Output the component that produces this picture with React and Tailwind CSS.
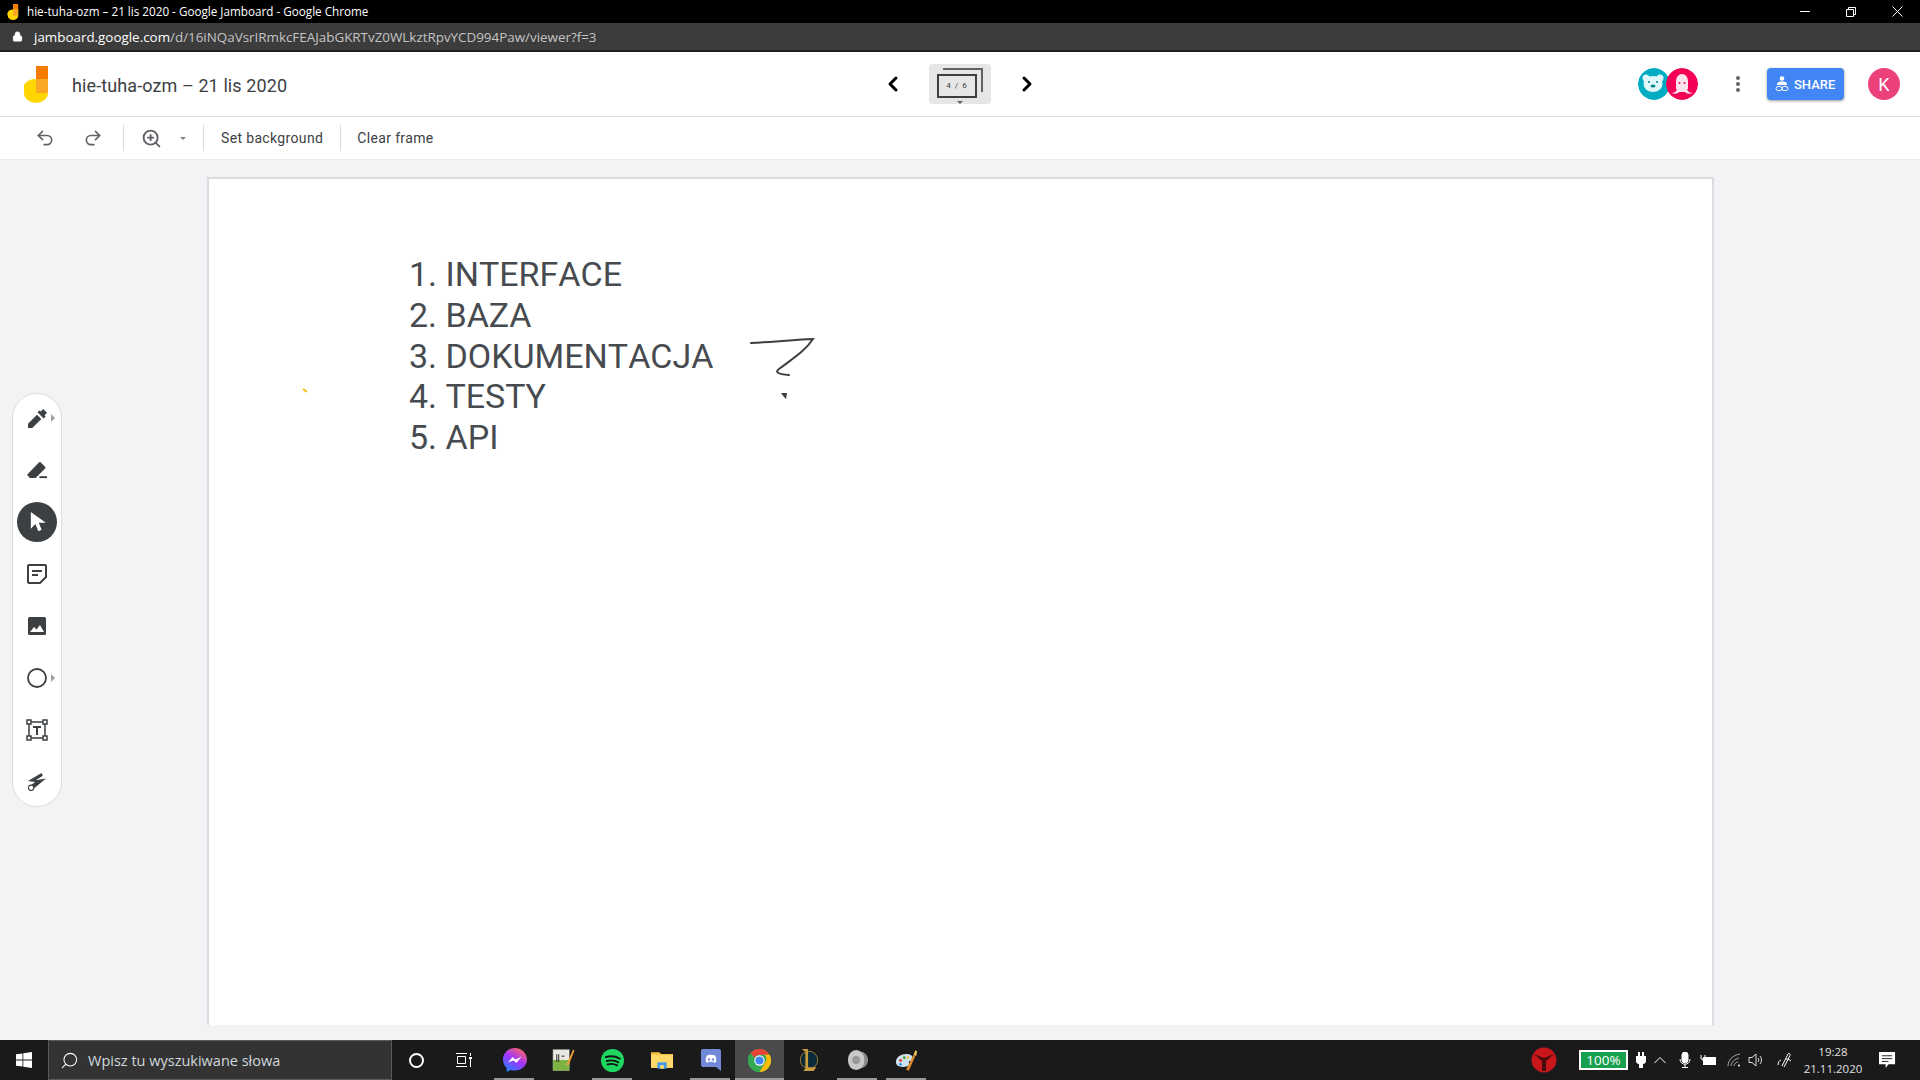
import React from "react";
import { Undo2, Redo2, ZoomIn, ChevronLeft, ChevronRight, Lock, Search } from "lucide-react";

const roboto = { fontFamily: "Roboto, sans-serif" };

function JamLogo({ className }) {
  return (
    <svg viewBox="0 0 24 37" className={className}>
      <rect x="12" y="0" width="12" height="14" fill="#f57c00" />
      <path d="M24 14v13a12 10 0 0 1-24 0 12 10 0 0 1 12-14h12z" fill="#ffd600" />
      <rect x="12" y="13" width="12" height="14" fill="#f9a825" />
    </svg>
  );
}

function Bear() {
  return (
    <svg viewBox="0 0 32 32" className="w-8 h-8 rounded-full">
      <circle cx="16" cy="16" r="16" fill="#00acc1" />
      <circle cx="8" cy="10" r="3.5" fill="#e0f7fa" />
      <circle cx="22" cy="10" r="3.5" fill="#e0f7fa" />
      <ellipse cx="15" cy="16" rx="9.5" ry="8" fill="#e0f7fa" />
      <circle cx="11" cy="14" r="1" fill="#00838f" />
      <circle cx="19" cy="14" r="1" fill="#00838f" />
      <ellipse cx="15" cy="18" rx="2.5" ry="1.5" fill="#00838f" />
    </svg>
  );
}

function Squid() {
  return (
    <svg viewBox="0 0 32 32" className="w-8 h-8 rounded-full">
      <circle cx="16" cy="16" r="16" fill="#f50057" />
      <path d="M10 21V13a6 7 0 0 1 12 0v8z" fill="#fce4ec" />
      <path d="M5 25c3 0 5-1 6-4h10c1 3 3 4 6 4-4 1.5-7 .5-8-1h-6c-1 1.500-4 2.500-8 1z" fill="#fce4ec" />
      <circle cx="13.500" cy="15" r="1" fill="#f50057" />
      <circle cx="18.500" cy="15" r="1" fill="#f50057" />
    </svg>
  );
}

const D = "#3c4043";

const PenI = () => (
  <svg viewBox="0 0 20 20" className="w-[19px] h-[19px]" fill={D}>
    <path d="M0 20v-4.500L9.500 6l4.500 4.500L4.500 20z" />
    <path d="M10 3.500 12 1.500l1.500 1L16 0l4 4-2.500 2.500 1 1.500-2 2z" />
  </svg>
);
const EraserI = () => (
  <svg viewBox="0 0 22 20" className="w-[21px] h-[19px]" fill={D}>
    <path d="M0 14.500 12.500 1.500a1.500 1.500 0 0 1 2 0l4.500 4.500a1.500 1.500 0 0 1 0 2L9 18H3z" />
    <rect x="13" y="16" width="8" height="2" />
  </svg>
);
const CursorI = () => (
  <svg viewBox="0 0 20 24" className="w-[17px] h-[20px]" fill="#fff">
    <path d="M2 0v20l5.500-5.500 3.500 8.500 4-1.700-3.500-8.300H20z" />
  </svg>
);
const NoteI = () => (
  <svg viewBox="0 0 20 20" className="w-5 h-5" fill="none" stroke={D} strokeWidth="2">
    <path d="M2 1h16a1 1 0 0 1 1 1v11l-6 6H2a1 1 0 0 1-1-1V2a1 1 0 0 1 1-1z" />
    <path d="M5 7h10M5 11h6" />
  </svg>
);
const ImageI = () => (
  <svg viewBox="0 0 18 18" className="w-[18px] h-[18px]">
    <rect width="18" height="18" rx="1.500" fill={D} />
    <path d="M2 15l4-5 2.500 2.500L12 8l4 7z" fill="#fff" />
  </svg>
);
const CircleI = () => (
  <svg viewBox="0 0 20 20" className="w-5 h-5" fill="none" stroke={D} strokeWidth="1.800">
    <circle cx="10" cy="10" r="9" />
  </svg>
);
const TextI = () => (
  <svg viewBox="0 0 22 22" className="w-[22px] h-[22px]">
    <path d="M3 3h16v16H3z" fill="none" stroke={D} strokeWidth="1.500" />
    <g fill="#fff" stroke={D} strokeWidth="1.500">
      <rect x="1" y="1" width="4" height="4" />
      <rect x="17" y="1" width="4" height="4" />
      <rect x="1" y="17" width="4" height="4" />
      <rect x="17" y="17" width="4" height="4" />
    </g>
    <path d="M7 7h8v2h-3v7h-2V9H7z" fill={D} />
  </svg>
);
const LaserI = () => (
  <svg viewBox="0 0 20 20" className="w-[18px] h-[18px]">
    <path d="M0 9 15 0l1.500 3-8 5L20 6 5.500 18 3 13.500l5-3.500z" fill={D} />
    <circle cx="3.500" cy="16.500" r="3" fill="#fff" stroke={D} strokeWidth="1.200" />
  </svg>
);
const Tri = () => <span className="absolute right-[6px] top-1/2 -mt-[4px] w-0 h-0 border-y-[4px] border-y-transparent border-l-[4px] border-l-[#9aa0a6]" />;

const tools = [
  { i: <PenI />, t: true },
  { i: <EraserI /> },
  { i: <CursorI />, a: true },
  { i: <NoteI /> },
  { i: <ImageI /> },
  { i: <CircleI />, t: true },
  { i: <TextI /> },
  { i: <LaserI /> },
];

const Messenger = () => (
  <svg viewBox="0 0 24 24" className="w-6 h-6">
    <defs>
      <linearGradient id="msg" x1="0.200" y1="1" x2="0.800" y2="0">
        <stop offset="0" stopColor="#1e88ff" />
        <stop offset="0.500" stopColor="#a033ff" />
        <stop offset="1" stopColor="#ff6968" />
      </linearGradient>
    </defs>
    <path d="M12 0C5.300 0 0 5 0 11.500c0 3.400 1.400 6.300 3.700 8.400V24l3.800-2.100c1.400.4 2.900.6 4.500.6 6.700 0 12-5 12-11S18.700 0 12 0z" fill="url(#msg)" />
    <path d="M5 14.500 9.500 9l3 2.500L18.500 8.500 13.500 15l-3-2.500z" fill="#fff" />
  </svg>
);
const Notepad = () => (
  <svg viewBox="0 0 24 26" className="w-[23px] h-[26px]">
    <rect x="1" y="2" width="17" height="22" fill="#e8e8e0" stroke="#888" strokeWidth="0.500" />
    <rect x="1" y="13" width="17" height="11" fill="#7cb342" />
    <path d="M5 7v8M7 7v8M10 9h3" stroke="#222" strokeWidth="1" />
    <path d="M15 18 22 2l1.500 1L17 19z" fill="#f0a030" />
  </svg>
);
const Spotify = () => (
  <svg viewBox="0 0 24 24" className="w-[23px] h-[23px]">
    <circle cx="12" cy="12" r="12" fill="#1ed760" />
    <path d="M5 8.500c5-1.500 10-1 14.500 1.500M6 12.500c4-1 8.500-.8 12 1.300M6.800 16c3.500-.8 7-.6 10 1" fill="none" stroke="#111" strokeWidth="2" strokeLinecap="round" />
  </svg>
);
const Folder = () => (
  <svg viewBox="0 0 24 20" className="w-[22px] h-[19px]">
    <path d="M0 1h9l2 2h13v15H0z" fill="#f6c243" />
    <rect x="0" y="4" width="24" height="14" fill="#ffd969" />
    <rect x="7" y="12" width="10" height="7" fill="#3d9be9" />
    <rect x="10" y="15" width="4" height="4" fill="#ffd969" />
  </svg>
);
const Discord = () => (
  <svg viewBox="0 0 20 22" className="w-[20px] h-[22px]">
    <path d="M2 0h16a2 2 0 0 1 2 2v20l-5-4H2a2 2 0 0 1-2-2V2a2 2 0 0 1 2-2z" fill="#7289da" />
    <path d="M5 13c-.6-2.500 0-5 1-6.500 2-1 6-1 8 0 1 1.500 1.600 4 1 6.500-1 .6-1.500.8-2 .8l-.7-1h-4.600l-.7 1c-.5 0-1-.2-2-.8z" fill="#fff" />
    <circle cx="8" cy="10.500" r="1.200" fill="#7289da" />
    <circle cx="12" cy="10.500" r="1.200" fill="#7289da" />
  </svg>
);
const Chrome = () => (
  <svg viewBox="0 0 24 24" className="w-[23px] h-[23px]">
    <circle cx="12" cy="12" r="12" fill="#34a853" />
    <path d="M12 0a12 12 0 0 1 10.400 6H12a6 6 0 0 0-5.200 3L2.600 4.500A12 12 0 0 1 12 0z" fill="#ea4335" />
    <path d="M22.400 6A12 12 0 0 1 12 24l5.200-9a6 6 0 0 0 0-9z" fill="#fbbc05" />
    <path d="M2.600 4.500 6.800 9v6l5.200 9A12 12 0 0 1 2.600 4.500z" fill="#34a853" />
    <circle cx="12" cy="12" r="5.400" fill="#fff" />
    <circle cx="12" cy="12" r="4.300" fill="#4285f4" />
  </svg>
);
const Lol = () => (
  <svg viewBox="0 0 24 26" className="w-[22px] h-[24px]">
    <circle cx="12" cy="13" r="9.500" fill="#0a2a3a" stroke="#c89b3c" strokeWidth="0.800" />
    <path d="M4 1h7v20h9l-3 4H6l2-3V4z" fill="#c89b3c" />
  </svg>
);
const Speaker = () => (
  <svg viewBox="0 0 24 24" className="w-[22px] h-[22px]">
    <ellipse cx="15" cy="12" rx="8" ry="9" fill="#8a8a8a" />
    <ellipse cx="10" cy="12" rx="9" ry="11" fill="#c8c8c8" />
    <circle cx="10" cy="12" r="4.500" fill="#999" />
  </svg>
);
const Paint = () => (
  <svg viewBox="0 0 26 24" className="w-6 h-[23px]">
    <path d="M1 14C1 8 7 5 12 5c6 0 8 3 7 6-1 2-4 1-4 3s1 3-1 4c-6 2-13 1-13-4z" fill="#cfe2f0" />
    <circle cx="6" cy="12" r="1.600" fill="#e53935" />
    <circle cx="10" cy="9" r="1.600" fill="#43a047" />
    <circle cx="14" cy="9" r="1.400" fill="#fbc02d" />
    <circle cx="6" cy="16" r="1.400" fill="#1e88e5" />
    <path d="M12 22 20 6l2 1-7 16z" fill="#e08a2c" />
    <path d="M20 6l2-5 2 1-1 5z" fill="#f5c060" />
  </svg>
);

const taskIcons = [
  { i: <Messenger />, u: true, w: "w-[49px]" },
  { i: <Notepad />, w: "w-[49px]" },
  { i: <Spotify />, u: true, w: "w-[49px]" },
  { i: <Folder />, w: "w-[49px]" },
  { i: <Discord />, u: true, w: "w-[49px]" },
  { i: <Chrome />, u: true, a: true, w: "w-[49px]" },
  { i: <Lol />, w: "w-[49px]" },
  { i: <Speaker />, u: true, w: "w-[49px]" },
  { i: <Paint />, u: true, w: "w-[49px]" },
];

function TrayIcons() {
  return (
    <>
      <svg viewBox="0 0 10 16" className="w-[10px] h-4 ml-[8px]" fill="#fff">
        <path d="M2 0h2v4h2V0h2v4h2v5c0 2-1.500 3-3 3v4H3v-4c-1.500 0-3-1-3-3V4h2z" />
      </svg>
      <svg viewBox="0 0 12 8" className="w-3 h-2 ml-[8px]" fill="none" stroke="#fff" strokeWidth="1">
        <path d="M.5 7 6 1.500 11.500 7" />
      </svg>
      <svg viewBox="0 0 12 16" className="w-3 h-4 ml-[13px]" fill="none" stroke="#fff">
        <rect x="3" y="0" width="6" height="11" rx="3" fill="#fff" />
        <path d="M1 7c0 7 10 7 10 0M6 12.500V16M3 15.500h6" />
      </svg>
      <svg viewBox="0 0 17 12" className="w-[17px] h-3 ml-[9px]" fill="none" stroke="#fff">
        <rect x="3.500" y="3.500" width="12" height="7" fill="#fff" />
        <path d="M1 1v4h4V1M3 5v2" />
      </svg>
      <svg viewBox="0 0 14 14" className="w-[14px] h-[14px] ml-[10px]" fill="none" stroke="#aaa">
        <path d="M1 13C1 7 6 2 13 1M4 13c0-4 4-7 8-8M7 13c0-2 2-4 4-4" />
        <circle cx="12" cy="12.500" r="1" fill="#fff" stroke="none" />
      </svg>
      <svg viewBox="0 0 16 14" className="w-4 h-[14px] ml-[7px]" fill="none" stroke="#ddd">
        <path d="M1 4.500h3L8 1v12L4 9.500H1zM10 5c1 1 1 3 0 4M12 3c2 2 2 6 0 8" />
      </svg>
      <svg viewBox="0 0 16 16" className="w-4 h-4 ml-[13px]" fill="none" stroke="#fff">
        <path d="M1 13c0-3 2-5 3-5M5 14 11 2c1-1.500 3 0 2 1.500L7 15M9 7c2 0 4 1 5 2" />
      </svg>
    </>
  );
}

export default function App() {
  return (
    <div className="w-[1920px] h-[1080px] flex flex-col overflow-hidden bg-[#f1f3f4]" style={roboto}>
      {/* window title */}
      <div className="h-[23px] bg-black flex items-center shrink-0 pl-[7px] relative">
        <JamLogo className="w-[12px] h-[16px]" />
        <span className="ml-[8px] text-white text-[11.700px]" style={{ fontFamily: '"Open Sans", sans-serif' }}>
          hie-tuha-ozm – 21 lis 2020 - Google Jamboard - Google Chrome
        </span>
        <div className="ml-auto flex items-center h-full text-white">
          <span className="w-[46px] flex justify-center"><span className="block w-[10px] h-px bg-white" /></span>
          <span className="w-[46px] flex justify-center">
            <svg viewBox="0 0 10 10" className="w-[10px] h-[10px]" fill="none" stroke="#fff"><path d="M.5 2.500h7v7h-7zM2.500 2.500v-2h7v7h-2" /></svg>
          </span>
          <span className="w-[46px] flex justify-center">
            <svg viewBox="0 0 11 11" className="w-[11px] h-[11px]" fill="none" stroke="#fff"><path d="M.5.500l10 10M10.500.500l-10 10" /></svg>
          </span>
        </div>
      </div>
      {/* url bar */}
      <div className="h-[29px] shrink-0 bg-[#3c3c3c] border-b-2 border-[#202020] flex items-center pl-[12px]">
        <Lock size={11} className="text-white" fill="#fff" />
        <span className="ml-[11px] text-[13.400px] leading-[24px] text-[#c4c4c4] pt-px" style={{ fontFamily: '"Open Sans", sans-serif' }}>
          <span className="text-white">jamboard.google.com</span>/d/16iNQaVsrIRmkcFEAJabGKRTvZ0WLkztRpvYCD994Paw/viewer?f=3
        </span>
      </div>
      {/* header */}
      <div className="h-[65px] shrink-0 bg-white border-b border-[#e0e0e0] flex items-center relative">
        <JamLogo className="w-[24px] h-[37px] ml-[24px]" />
        <span className="ml-[24px] text-[18px] tracking-[0.100px] pt-[2px] text-[#3c4043]">hie-tuha-ozm – 21 lis 2020</span>
        <div className="absolute left-[881px] top-[12px] flex items-center">
          <ChevronLeft size={24} strokeWidth={3} className="text-black" />
          <div className="ml-[24px] w-[62px] h-[40px] rounded bg-[#e6e6e6] relative">
            <div className="absolute left-[14px] top-[4px] w-[40px] h-[24px] border-t-2 border-r-2 border-[#5f6368]" />
            <div className="absolute left-[8px] top-[10px] w-[40px] h-[24px] border-[2px] border-[#3c4043] bg-[#e6e6e6] flex items-center justify-center text-[8px] text-[#3c4043] tracking-[1px]">4 / 6</div>
            <span className="absolute left-[28px] bottom-0 w-0 h-0 border-x-[3px] border-x-transparent border-t-[3px] border-t-[#5f6368]" />
          </div>
          <ChevronRight size={24} strokeWidth={3} className="ml-[24px] text-black" />
        </div>
        <div className="ml-auto flex items-center pr-[20px]">
          <Bear />
          <div className="-ml-1 relative"><Squid /></div>
          <div className="ml-[38px] flex flex-col gap-[2px]">
            <span className="w-1 h-1 rounded-full bg-[#5f6368]" />
            <span className="w-1 h-1 rounded-full bg-[#5f6368]" />
            <span className="w-1 h-1 rounded-full bg-[#5f6368]" />
          </div>
          <div className="ml-[27px] w-[77px] h-[32px] rounded-sm bg-[#4285f4] shadow-[0_1px_3px_rgba(0,0,0,0.4)] flex items-center pl-[8px] text-white text-[13px] font-medium">
            <svg viewBox="0 0 14 16" className="w-[14px] h-4" fill="#fff">
              <circle cx="7" cy="2.500" r="2.300" />
              <path d="M2 9c0-3 2-3.500 5-3.500S12 6 12 9z" />
              <rect x="1" y="10.500" width="6" height="4" rx="2" fill="none" stroke="#fff" />
              <rect x="7" y="10.500" width="6" height="4" rx="2" fill="none" stroke="#fff" />
            </svg>
            <span className="ml-[5px] pt-px">SHARE</span>
          </div>
          <div className="ml-[24px] w-8 h-8 rounded-full bg-[#ec407a] text-white text-[18px] flex items-center justify-center">K</div>
        </div>
      </div>
      {/* toolbar */}
      <div className="h-[43px] shrink-0 bg-white border-b border-[#e8eaed] flex items-center text-[14px] tracking-[0.350px] text-[#3c4043]">
        <Undo2 size={20} strokeWidth={2} className="ml-[35px] text-[#5f6368]" />
        <Redo2 size={20} strokeWidth={2} className="ml-[28px] text-[#5f6368]" />
        <span className="ml-[20px] w-px h-[26px] bg-[#dadce0]" />
        <ZoomIn size={21} strokeWidth={2.200} className="ml-[17px] text-[#5f6368]" />
        <span className="ml-[18px] w-0 h-0 border-x-[3px] border-x-transparent border-t-[3px] border-t-[#80868b]" />
        <span className="ml-[17px] w-px h-[26px] bg-[#dadce0]" />
        <span className="ml-[17px]">Set background</span>
        <span className="ml-[17px] w-px h-[26px] bg-[#dadce0]" />
        <span className="ml-[16px]">Clear frame</span>
      </div>
      {/* canvas */}
      <div className="flex-1 min-h-0 relative pl-[207px] pt-[17px] pb-0">
        <div className="w-[1507px] h-[848px] bg-white border-2 border-b-0 border-[#dadce0] relative pl-[200px] pt-[75px] text-[34px] leading-[40.800px] text-[#474b4f] [font-kerning:none]">
          <div>1. INTERFACE</div>
          <div>2. BAZA</div>
          <div>3. DOKUMENTACJA</div>
          <div>4. TESTY</div>
          <div>5. API</div>
          <svg viewBox="0 0 1506 848" className="absolute left-0 top-0 w-[1506px] h-[848px] pointer-events-none" fill="none">
            <path d="M542 164c20-1 40-3 62-4-8 12-18 18-34 30-4 3-2 5 10 6" stroke="#3c4043" strokeWidth="2" strokeLinecap="round" />
            <path d="M572 214l6 0-1 6-2-2z" fill="#3c4043" />
            <path d="M94 210l4 3" stroke="#fbbc04" strokeWidth="1.800" />
          </svg>
        </div>
        <div className="absolute left-[12px] top-[233px] w-[50px] h-[414px] bg-white border border-[#dadce0] rounded-[25px] flex flex-col items-center justify-center">
          {tools.map((t, k) => (
            <div key={k} className="relative w-full h-[52px] shrink-0 flex items-center justify-center">
              {t.a ? (
                <div className="w-10 h-10 rounded-full bg-[#3c4043] flex items-center justify-center">{t.i}</div>
              ) : t.i}
              {t.t && <Tri />}
            </div>
          ))}
        </div>
      </div>
      {/* taskbar */}
      <div className="h-[40px] shrink-0 bg-[#1a1a1a] flex items-center text-white">
        <div className="w-[48px] flex justify-center">
          <svg viewBox="0 0 16 16" className="w-4 h-4" fill="#fff"><path d="M0 2.300 6.500 1.400v6.200H0zM7.300 1.300 16 0v7.600H7.300zM0 8.400h6.500v6.200L0 13.700zM7.300 8.400H16V16l-8.700-1.300z" /></svg>
        </div>
        <div className="w-[344px] h-[40px] bg-[#333] border border-[#5a5a5a] flex items-center pl-[11px]">
          <Search size={19} strokeWidth={1.300} className="-scale-x-100 text-white" />
          <span className="ml-[9px] text-[14.500px] pt-px text-[#cfd8dc]" style={{ fontFamily: '"Open Sans", sans-serif' }}>Wpisz tu wyszukiwane słowa</span>
        </div>
        <div className="w-[48px] flex justify-center"><span className="w-[15px] h-[15px] rounded-full border-2 border-white" /></div>
        <div className="w-[48px] flex justify-center">
          <svg viewBox="0 0 16 14" className="w-4 h-[14px]" fill="none" stroke="#fff"><path d="M0 .5h11M0 13.500h11M1.500 3.500h8v7h-8zM14.500 0v3M14.500 6v8" /><rect x="13" y="4" width="3" height="2" fill="#fff" stroke="none" /></svg>
        </div>
        <div className="w-[2px]" />
        {taskIcons.map((t, k) => (
          <div key={k} className={`${t.w} h-[40px] relative flex items-center justify-center ${t.a ? "bg-[#4a4a4a]" : ""}`}>
            {t.i}
            {t.u && <span className={`absolute bottom-0 h-[2px] bg-[#9a9a9a] ${t.a ? "left-0 right-0" : "left-[4px] right-[5px]"}`} />}
          </div>
        ))}
        <div className="ml-auto flex items-center pr-[24px]">
          <svg viewBox="0 0 26 26" className="w-[26px] h-[26px]">
            <circle cx="13" cy="13" r="12.500" fill="#c8161d" />
            <path d="M3 7l10 4 10-4-8 7v10h-4V14z" fill="#4a0a0c" />
          </svg>
          <div className="ml-[22px] w-[49px] h-[20px] border-2 border-white bg-[#17a04d] text-[13.500px] leading-[16px] text-center" style={{ fontFamily: '"Open Sans", sans-serif' }}>100%</div>
          <TrayIcons />
          <div className="ml-[7px] w-[66px] text-center text-[11.500px] leading-[17px] text-[#e0e0e0]" style={{ fontFamily: '"Open Sans", sans-serif' }}>
            <div>19:28</div>
            <div>21.11.2020</div>
          </div>
          <svg viewBox="0 0 18 18" className="w-[17px] h-[17px] ml-[13px]" fill="#fff">
            <path d="M0 0h17v13H10l-3 4v-4H0z" />
            <path d="M3 4h11M3 7h11M3 10h7" stroke="#1a1a1a" strokeWidth="1" />
          </svg>
        </div>
      </div>
    </div>
  );
}
